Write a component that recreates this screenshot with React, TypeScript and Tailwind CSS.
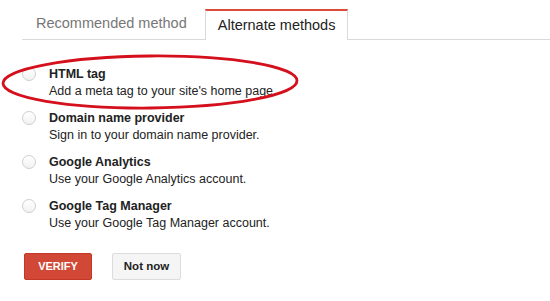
import { useState } from "react";

const methods = [
  { id: "html", title: "HTML tag", desc: "Add a meta tag to your site's home page." },
  { id: "domain", title: "Domain name provider", desc: "Sign in to your domain name provider." },
  { id: "ga", title: "Google Analytics", desc: "Use your Google Analytics account." },
  { id: "gtm", title: "Google Tag Manager", desc: "Use your Google Tag Manager account." },
];

export default function App() {
  const [selected, setSelected] = useState<string | null>(null);

  return (
    <div className="relative w-[550px] h-[301px] bg-white overflow-hidden font-['Liberation_Sans',Arial,sans-serif] text-[#222]">
      {/* Tabs */}
      <div className="ml-[22px] mt-[9px] flex border-b border-[#d9d9d9] h-[31px]">
        <div className="pl-[14px] pr-[18px] flex items-center text-[14.5px] text-[#777]">
          Recommended method
        </div>
        <div className="relative -mb-px px-[12px] flex items-center bg-white border-x border-[#d9d9d9] border-t-2 border-t-[#dd4b39] text-[14.5px] text-[#222]">
          Alternate methods
        </div>
      </div>

      {/* Options */}
      <div className="ml-[22px] mt-[26px] flex flex-col gap-[11px]">
        {methods.map((m) => (
          <label key={m.id} className="flex items-start gap-[13px] cursor-pointer" onClick={() => setSelected(m.id)}>
            <span className="mt-[1px] w-[14px] h-[14px] rounded-full border border-[#cfcfcf] bg-gradient-to-b from-white to-[#f2f2f2] flex items-center justify-center shrink-0">
              {selected === m.id && <span className="w-[6px] h-[6px] rounded-full bg-[#666]" />}
            </span>
            <div className="flex flex-col">
              <span className="text-[12.5px] font-bold leading-[16px]">{m.title}</span>
              <span className="text-[12.5px] leading-[15px] mt-[2px]">{m.desc}</span>
            </div>
          </label>
        ))}
      </div>

      {/* Buttons */}
      <div className="ml-[24px] mt-[22px] flex gap-[20px]">
        <button className="w-[68px] h-[27px] rounded-[2px] bg-[#d14836] border border-[#c53727] text-white text-[11px] font-bold">
          VERIFY
        </button>
        <button className="w-[69px] h-[27px] rounded-[2px] bg-[#f5f5f5] border border-[#dcdcdc] text-[#222] text-[11.5px] font-bold">
          Not now
        </button>
      </div>

      {/* Hand-drawn highlight around the first option */}
      <svg className="absolute left-0 top-0 pointer-events-none" width="550" height="301">
        <ellipse cx="150" cy="82" rx="147" ry="26" fill="none" stroke="#d4101d" strokeWidth="2.8" transform="rotate(-0.5 150 82)" />
      </svg>
    </div>
  );
}
